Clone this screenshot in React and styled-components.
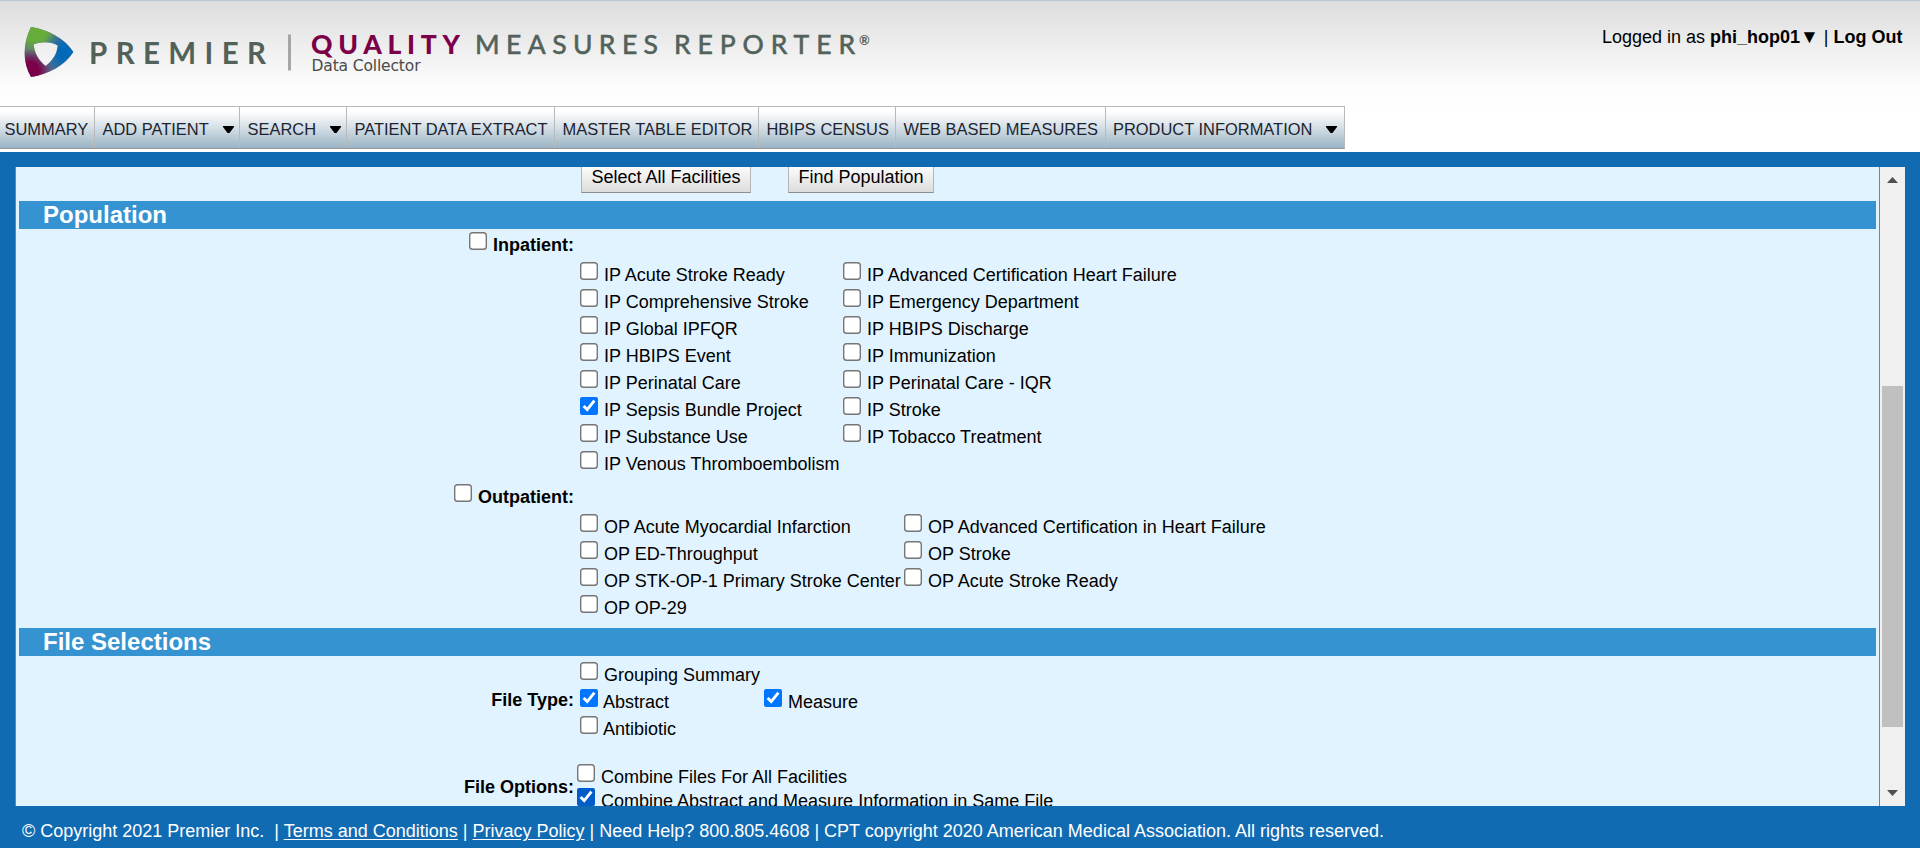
import React from "react";
import styled, { createGlobalStyle } from "styled-components";

const GlobalStyle = createGlobalStyle`
  *, *::before, *::after { box-sizing: border-box; }
  body {
    margin: 0;
    overflow: hidden;
    background: #106bb3;
    color: #000;
    font: 18px/21px "Liberation Sans", Arial, sans-serif;
  }
`;

const Page = styled.div`
  display: flex;
  flex-direction: column;
  width: 1920px;
  height: 848px;
`;

const Header = styled.header`
  display: flex;
  flex-direction: column;
  justify-content: space-between;
  height: 152px;
  padding-bottom: 3px;
  border-top: 1px solid #b9c5d1;
  background: linear-gradient(#dddddd 0, #eeeeee 45px, #fdfdfd 88px, #ffffff 115px);
`;

const Masthead = styled.div`
  display: flex;
  justify-content: space-between;
  height: 105px;
`;

const Logo = styled.svg`
  display: block;
  width: 900px;
  height: 90px;
`;

const Account = styled.div`
  padding: 26px 17.5px 0 0;
  white-space: pre;
`;

const AccountCaret = styled.span`
  font-size: 19px;
  line-height: 1;
`;

const Nav = styled.nav`
  display: flex;
  align-self: flex-start;
  height: 43px;
  border: 1px solid #b9b9b9;
  border-left: 0;
  border-bottom-color: #999;
  background: linear-gradient(#ffffff 10%, #d5dfe6 50%, #9ab3c5 100%);
`;

const NavItem = styled.a`
  display: flex;
  justify-content: space-between;
  align-items: center;
  width: ${(p) => p.$width}px;
  padding: 4px 5px 0 ${(p) => (p.$first ? 4.5 : 7.5)}px;
  border-left: ${(p) => (p.$first ? 0 : 1)}px solid #b9b9b9;
  color: #1c2431;
  font-size: 16.45px;
  white-space: nowrap;

  &:last-child {
    padding-left: 7px;
    padding-right: 7px;
  }
`;

const Caret = styled.svg`
  width: 11px;
  height: 7px;
`;

const Frame = styled.main`
  display: flex;
  height: 639px;
  margin: 15px 15px 0;
`;

const Viewport = styled.div`
  width: 1865px;
  padding: 0 3px;
  overflow: hidden;
  border: solid #808080;
  border-width: 0 1px;
  background: #e0f3ff;
`;

const Scrollbar = styled.div`
  display: flex;
  flex-direction: column;
  align-items: center;
  width: 25px;
  padding: 10px 0;
  background: #f0f0f0;
`;

const Arrow = styled.svg`
  width: 11px;
  height: 6px;
`;

const Thumb = styled.div`
  width: 21px;
  height: 341px;
  margin: 203px 0 auto;
  background: #c0c0c0;
`;

const ButtonRow = styled.div`
  display: flex;
  gap: 37px;
  height: 38px;
  margin-top: -4px;
  padding-left: 562px;
`;

const Button = styled.button`
  width: ${(p) => p.$width}px;
  height: 30px;
  padding: 0 0 2px;
  border: 1px solid #b5b5b5;
  border-bottom-color: #8e8e8e;
  background: linear-gradient(#ffffff, #dcdcdc);
  color: #000;
  font: inherit;
`;

const SectionTitle = styled.h2`
  height: 28px;
  margin: 0;
  padding-left: 24px;
  background: #3593d2;
  color: #fff;
  font-size: 24px;
  line-height: 28px;
`;

const Group = styled.section`
  display: flex;
  height: ${(p) => p.$height}px;
  padding-top: ${(p) => p.$top}px;
`;

const GroupLabel = styled.div`
  display: flex;
  justify-content: flex-end;
  width: 555px;
  padding-top: ${(p) => p.$top || 0}px;
  font-weight: bold;
`;

const Options = styled.div`
  display: grid;
  grid-template-columns: ${(p) => p.$first}px auto;
  grid-auto-rows: ${(p) => p.$pitch || 27}px;
  align-content: start;
  margin-left: ${(p) => p.$left || 6}px;
  padding-top: ${(p) => p.$top || 0}px;
`;

const Choice = styled.label`
  display: flex;
  align-items: flex-start;
  gap: ${(p) => (p.$tight ? 5 : 6)}px;
  grid-column: ${(p) => p.$column || "auto"};
  white-space: nowrap;
`;

const Checkbox = styled.input.attrs({ type: "checkbox" })`
  flex: none;
  width: 18px;
  height: 18px;
  margin: 0;
  accent-color: ${(p) => (p.$active ? "#005cc8" : "#0075ff")};

  &:not(:checked) {
    appearance: none;
    border-radius: 3.5px;
    background: #fff;
    box-shadow: inset 0 0 0 1.4px #767676;
  }
`;

const ChoiceText = styled.span`
  padding-top: 3px;
`;

const Footer = styled.footer`
  padding: 15px 0 0 22px;
  color: #fff;
  white-space: pre;
`;

const FooterLink = styled.a`
  text-decoration: underline;
  text-underline-offset: 2px;
`;

function Option({ label, checked, active, column, tight }) {
  return (
    <Choice $column={column} $tight={tight}>
      <Checkbox defaultChecked={checked} $active={active} />
      <ChoiceText>{label}</ChoiceText>
    </Choice>
  );
}

function Brand() {
  const mark =
    "M31 27C49 30 64 38 73.300 52C64 66 49 74 31 77C22.500 62 22.500 44 31 27ZM33.500 44.500C35 54 39 61 45.700 66C53 60 57 54 57.800 45.500C51 41.500 41 41.500 33.500 44.500Z";
  return (
    <Logo viewBox="0 1 900 90">
      <defs>
        <radialGradient id="green" gradientUnits="userSpaceOnUse" cx="35" cy="30" r="27">
          <stop offset="0.4" stopColor="#66ad3b" />
          <stop offset="1" stopColor="#66ad3b" stopOpacity="0" />
        </radialGradient>
        <radialGradient id="blue" gradientUnits="userSpaceOnUse" cx="67" cy="53" r="25">
          <stop offset="0.3" stopColor="#0069b8" />
          <stop offset="1" stopColor="#0069b8" stopOpacity="0" />
        </radialGradient>
        <radialGradient id="plum" gradientUnits="userSpaceOnUse" cx="30" cy="71" r="22">
          <stop offset="0.4" stopColor="#7b0048" />
          <stop offset="1" stopColor="#7b0048" stopOpacity="0" />
        </radialGradient>
      </defs>
      <g fillRule="evenodd">
        <path d={mark} fill="#58708a" />
        <path d={mark} fill="url(#green)" />
        <path d={mark} fill="url(#blue)" />
        <path d={mark} fill="url(#plum)" />
      </g>
      <g fontFamily="Lato, sans-serif" fill="#52625a">
        <text x="89" y="64" fontSize="29.500" fontWeight="700" textLength="177">PREMIER</text>
        <rect x="288" y="34.500" width="3" height="36" fill="#a5a5a5" />
        <text x="311" y="53.500" fontSize="26.500" fontWeight="900" fill="#7b0048" textLength="149">QUALITY</text>
        <text x="475" y="53.500" fontSize="26.500" textLength="183" stroke="#52625a" strokeWidth="0.600">MEASURES</text>
        <text x="674" y="53.500" fontSize="26.500" textLength="181" stroke="#52625a" strokeWidth="0.600">REPORTER</text>
        <text x="859" y="44.500" fontSize="13" fontWeight="700">®</text>
      </g>
      <text x="311.500" y="70.500" fontFamily="DejaVu Sans, sans-serif" fontSize="15.500" fill="#4a4a4a" textLength="109">Data Collector</text>
    </Logo>
  );
}

const navItems = [
  { label: "SUMMARY", width: 94 },
  { label: "ADD PATIENT", width: 145, menu: true },
  { label: "SEARCH", width: 107, menu: true },
  { label: "PATIENT DATA EXTRACT", width: 208 },
  { label: "MASTER TABLE EDITOR", width: 204 },
  { label: "HBIPS CENSUS", width: 137 },
  { label: "WEB BASED MEASURES", width: 210 },
  { label: "PRODUCT INFORMATION", width: 239, menu: true },
];

const inpatient = [
  "IP Acute Stroke Ready",
  "IP Advanced Certification Heart Failure",
  "IP Comprehensive Stroke",
  "IP Emergency Department",
  "IP Global IPFQR",
  "IP HBIPS Discharge",
  "IP HBIPS Event",
  "IP Immunization",
  "IP Perinatal Care",
  "IP Perinatal Care - IQR",
  "IP Sepsis Bundle Project",
  "IP Stroke",
  "IP Substance Use",
  "IP Tobacco Treatment",
  "IP Venous Thromboembolism",
];

const outpatient = [
  "OP Acute Myocardial Infarction",
  "OP Advanced Certification in Heart Failure",
  "OP ED-Throughput",
  "OP Stroke",
  "OP STK-OP-1 Primary Stroke Center",
  "OP Acute Stroke Ready",
  "OP OP-29",
];

export default function App() {
  return (
    <Page>
      <GlobalStyle />
      <Header>
        <Masthead>
          <Brand />
          <Account>
            Logged in as{" "}
            <b>
              phi_hop01<AccountCaret>▼</AccountCaret>
            </b>
            {" | "}
            <b>Log Out</b>
          </Account>
        </Masthead>
        <Nav>
          {navItems.map((item, i) => (
            <NavItem key={item.label} $width={item.width} $first={i === 0}>
              {item.label}
              {item.menu && (
                <Caret viewBox="0 0 11 7">
                  <path d="M0 0H11V1L6.500 7H4.500L0 1Z" />
                </Caret>
              )}
            </NavItem>
          ))}
        </Nav>
      </Header>
      <Frame>
        <Viewport>
          <ButtonRow>
            <Button $width={170}>Select All Facilities</Button>
            <Button $width={146}>Find Population</Button>
          </ButtonRow>
          <SectionTitle>Population</SectionTitle>
          <Group $height={252} $top={3}>
            <GroupLabel>
              <Option label="Inpatient:" />
            </GroupLabel>
            <Options $first={263} $top={30}>
              {inpatient.map((name) => (
                <Option key={name} label={name} checked={name === "IP Sepsis Bundle Project"} />
              ))}
            </Options>
          </Group>
          <Group $height={147} $top={3}>
            <GroupLabel>
              <Option label="Outpatient:" />
            </GroupLabel>
            <Options $first={324} $top={30}>
              {outpatient.map((name) => (
                <Option key={name} label={name} />
              ))}
            </Options>
          </Group>
          <SectionTitle>File Selections</SectionTitle>
          <Group $height={108} $top={6}>
            <GroupLabel $top={28}>File Type:</GroupLabel>
            <Options $first={184}>
              <Option label="Grouping Summary" column="1 / 3" />
              <Option label="Abstract" checked tight />
              <Option label="Measure" checked />
              <Option label="Antibiotic" tight />
            </Options>
          </Group>
          <Group $height={80} $top={0}>
            <GroupLabel $top={13}>File Options:</GroupLabel>
            <Options $first={500} $pitch={24} $left={3}>
              <Option label="Combine Files For All Facilities" column="1 / 3" />
              <Option
                label="Combine Abstract and Measure Information in Same File"
                column="1 / 3"
                checked
                active
              />
            </Options>
          </Group>
        </Viewport>
        <Scrollbar>
          <Arrow viewBox="0 0 11 6">
            <path d="M5.500 0L11 6H0Z" fill="#505050" />
          </Arrow>
          <Thumb />
          <Arrow viewBox="0 0 11 6">
            <path d="M0 0H11L5.500 6Z" fill="#505050" />
          </Arrow>
        </Scrollbar>
      </Frame>
      <Footer>
        {"© Copyright 2021 Premier Inc.  | "}
        <FooterLink>Terms and Conditions</FooterLink>
        {" | "}
        <FooterLink>Privacy Policy</FooterLink>
        {" | Need Help? 800.805.4608 | CPT copyright 2020 American Medical Association. All rights reserved."}
      </Footer>
    </Page>
  );
}
